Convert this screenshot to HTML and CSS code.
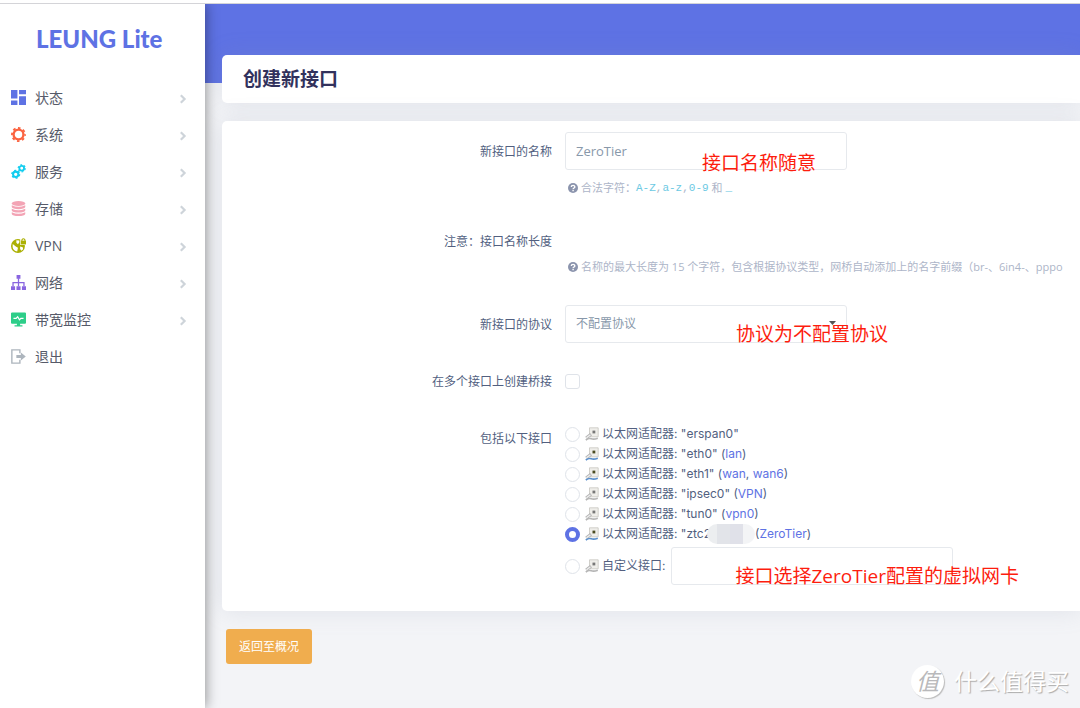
FILE: index.html
```html
<!DOCTYPE html>
<html lang="zh-CN">
<head>
<meta charset="utf-8">
<title>创建新接口</title>
<link rel="stylesheet" href="styles.css">
</head>
<body>
<svg class="defs" width="0" height="0" aria-hidden="true">
  <symbol id="chev" viewBox="0 0 8 10"><path d="M1.8 1.2 5.6 5 1.8 8.8" fill="none" stroke="currentColor" stroke-width="2.2"/></symbol>
  <symbol id="help" viewBox="0 0 10 10"><circle cx="5" cy="5" r="5" fill="currentColor"/><path d="M3.3 4C3.3 1.8 6.8 1.9 6.8 3.9 6.8 5.1 5.1 4.9 5.1 6.2M5.1 7v1.3" fill="none" stroke="#fff" stroke-width="1.4"/></symbol>
  <symbol id="nic" viewBox="0 0 14 14"><path d="M4.500 .8h8.700v9H4.500z" fill="#efeeea" stroke="#c6c5c0" stroke-width=".8"/><path d="M7.500 3.600h2.800v2.800H7.500z" fill="var(--port)"/><path d="M1.200 11 6 7.200" stroke="#b2b2b2" stroke-width="3"/><path d="M1.400 10.900 5.500 7.700" stroke="#ececec" stroke-width="1.400"/><path d="M.8 13q3-2.200 5.500-1.200T12.800 11.200" fill="none" stroke="var(--cable)" stroke-width="1.700"/></symbol>
</svg>
<div class="topline"></div>
<div class="app">
  <aside class="sidebar">
    <div class="logo">LEUNG Lite</div>
    <nav class="menu">
      <a href="#"><svg class="ico c-blue" viewBox="0 0 14 14"><path d="M0 0h6v8H0zM7.500 0H14v4H7.500zM0 9.800h6V14H0zM7.500 5.800H14V14H7.500z"/></svg><span>状态</span><svg class="chev"><use href="#chev"/></svg></a>
      <a href="#"><svg class="ico c-orange" viewBox="0 0 14 14"><circle cx="7" cy="7" r="4.600" fill="none" stroke="currentColor" stroke-width="2.200"/><circle cx="7" cy="7" r="6.100" fill="none" stroke="currentColor" stroke-width="1.700" stroke-dasharray="2.400 2.391" stroke-dashoffset="1.200"/></svg><span>系统</span><svg class="chev"><use href="#chev"/></svg></a>
      <a href="#"><svg class="ico c-cyan" viewBox="0 0 14 14"><g fill="none" stroke="currentColor"><circle cx="4.400" cy="9.600" r="2.500" stroke-width="1.900"/><circle cx="4.400" cy="9.600" r="3.700" stroke-width="1.100" stroke-dasharray="1.900 1.974"/><circle cx="10" cy="4" r="2.200" stroke-width="1.700"/><circle cx="10" cy="4" r="3.300" stroke-width="1.100" stroke-dasharray="1.700 1.756"/></g></svg><span>服务</span><svg class="chev"><use href="#chev"/></svg></a>
      <a href="#"><svg class="ico c-pink" viewBox="0 0 14 14"><ellipse cx="7" cy="2.300" rx="6.300" ry="2.300"/><path d="M.7 4q6.300 2.800 12.600 0v1.700Q12.500 7.600 7 7.600T.7 5.700zM.7 7.200q6.300 2.800 12.600 0v1.700q-.8 1.900-6.300 1.900T.7 8.900zM.7 10.400q6.300 2.800 12.600 0v1.700Q12.500 14 7 14T.7 12.100z"/></svg><span>存储</span><svg class="chev"><use href="#chev"/></svg></a>
      <a href="#"><svg class="ico c-olive" viewBox="0 0 14 14"><circle cx="6.500" cy="7.500" r="6.500"/><path d="M1.600 5.500 4.500 8 6.500 9.200 5.800 12.600Q2 12 1.500 8.500zM5 2.200l2.800.2V4L6.500 5.800 5 4.500zM8.500 8l2.500.6.3 1.800-1.600 1.400-1.200-1.500z" fill="#fff"/><path d="M8.600 0H14v6.500H8.600z" fill="#fff"/><path d="M9.200 2.500H14V6H9.200z"/><path d="M10.200 3V1.700q1.400-1.900 2.800 0V3" fill="none" stroke="currentColor" stroke-width="1"/></svg><span>VPN</span><svg class="chev"><use href="#chev"/></svg></a>
      <a href="#"><svg class="ico c-violet" viewBox="0 0 14 14"><path d="M5.200 0h3.600v3.400H5.200zM0 10.400h3.800V14H0zM5.100 10.400h3.800V14H5.100zM10.200 10.400H14V14h-3.800z"/><path d="M7 3v7.500M1.900 10.500V7.200h10.200v3.300" fill="none" stroke="currentColor" stroke-width="1.200"/></svg><span>网络</span><svg class="chev"><use href="#chev"/></svg></a>
      <a href="#"><svg class="ico c-green" viewBox="0 0 14 14"><path d="M1 .5h12q1 0 1 1V10q0 1-1 1H8.500v1.300h2.200v1.200H3.300v-1.200h2.200V11H1q-1 0-1-1V1.500q0-1 1-1z"/><path d="M2.300 5.900h2.500l1.400-1.500 1.700 2.900 1.300-1.400h2.500" fill="none" stroke="#fff" stroke-width="1.100"/></svg><span>带宽监控</span><svg class="chev"><use href="#chev"/></svg></a>
      <a href="#"><svg class="ico c-gray" viewBox="0 0 14 14"><path d="M8.300 4V.8H.8v12.400h7.500V10" fill="none" stroke="currentColor" stroke-width="1.300"/><path d="M5 5.600h4.200V3.200L13.800 7l-4.600 3.800V8.400H5z"/></svg><span>退出</span></a>
    </nav>
  </aside>
  <main class="main">
    <header class="card title-card"><h1>创建新接口</h1></header>
    <form class="card form">
      <div class="row">
        <label class="name" for="ifname">新接口的名称</label>
        <div class="field">
          <input class="box" id="ifname" type="text" value="ZeroTier">
          <p class="note note-name">接口名称随意</p>
          <p class="hint"><svg><use href="#help"/></svg>合法字符：<code>A-Z</code><code class="sep">,</code><code>a-z</code><code class="sep">,</code><code>0-9</code> 和 <code>_</code></p>
        </div>
      </div>
      <div class="row">
        <span class="name">注意：接口名称长度</span>
        <div class="field notice">
          <p class="hint"><svg><use href="#help"/></svg>名称的最大长度为 15 个字符，包含根据协议类型，网桥自动添加上的名字前缀（br-、6in4-、pppo</p>
        </div>
      </div>
      <div class="row">
        <label class="name" for="proto">新接口的协议</label>
        <div class="field">
          <select class="box" id="proto"><option>不配置协议</option></select>
          <svg class="caret" viewBox="0 0 7 4"><path d="M0 0h7L3.500 4z"/></svg>
          <p class="note note-proto">协议为不配置协议</p>
        </div>
      </div>
      <div class="row compact">
        <label class="name" for="bridge">在多个接口上创建桥接</label>
        <div class="field"><input class="check" id="bridge" type="checkbox"></div>
      </div>
      <div class="row">
        <span class="name">包括以下接口</span>
        <div class="field list">
          <div class="opt"><input type="radio" name="dev" id="d1"><svg class="nic"><use href="#nic"/></svg><label for="d1">以太网适配器: "erspan0"</label></div>
          <div class="opt"><input type="radio" name="dev" id="d2"><svg class="nic up"><use href="#nic"/></svg><label for="d2">以太网适配器: "eth0" (<a href="#">lan</a>)</label></div>
          <div class="opt"><input type="radio" name="dev" id="d3"><svg class="nic up"><use href="#nic"/></svg><label for="d3">以太网适配器: "eth1" (<a href="#">wan</a>, <a href="#">wan6</a>)</label></div>
          <div class="opt"><input type="radio" name="dev" id="d4"><svg class="nic"><use href="#nic"/></svg><label for="d4">以太网适配器: "ipsec0" (<a href="#">VPN</a>)</label></div>
          <div class="opt"><input type="radio" name="dev" id="d5"><svg class="nic"><use href="#nic"/></svg><label for="d5">以太网适配器: "tun0" (<a href="#">vpn0</a>)</label></div>
          <div class="opt"><input type="radio" name="dev" id="d6" checked><svg class="nic up"><use href="#nic"/></svg><label for="d6">以太网适配器: "ztc2<span class="smudge"></span>(<a href="#">ZeroTier</a>)</label></div>
          <div class="opt custom"><input type="radio" name="dev" id="d7"><svg class="nic"><use href="#nic"/></svg><label for="d7">自定义接口:</label>
            <div class="field"><input class="box" type="text" aria-label="自定义接口"><p class="note note-dev">接口选择ZeroTier配置的虚拟网卡</p></div>
          </div>
        </div>
      </div>
    </form>
    <button class="back" type="button">返回至概况</button>
  </main>
  <div class="mark"><span class="seal">值</span><span>什么值得买</span></div>
</div>
</body>
</html>
```
FILE: styles.css
```css
* { box-sizing: border-box; }
body {
  margin: 0;
  min-height: 100vh;
  display: flex;
  flex-direction: column;
  overflow: hidden;
  background: #f3f4f7;
  color: #525f7f;
  font: 12px/20px "Open Sans", "Noto Sans CJK SC", sans-serif;
}
p, h1 { margin: 0; }
a { color: #5e72e4; text-decoration: none; }
.defs { position: absolute; }

.topline { height: 4px; background: #fff; border-bottom: 1px solid #d4d4d8; }
.app { position: relative; flex: 1; display: flex; }

.sidebar {
  position: relative;
  z-index: 1;
  flex: 0 0 205px;
  background: #fff;
  box-shadow: 1px 0 12px rgba(0, 0, 0, .4);
  clip-path: inset(0 -30px 0 0);
}
.logo {
  padding: 17px 0 0 36px;
  height: 75px;
  font: 900 24px/36px Lato, sans-serif;
  color: #5e72e4;
  white-space: nowrap;
}
.menu a {
  display: flex;
  align-items: center;
  height: 37px;
  padding: 0 18px 0 11px;
  color: #565a69;
  font-size: 14px;
}
.menu span { flex: 1; padding-left: 9px; }
.ico { width: 15px; height: 15px; fill: currentColor; }
.chev { width: 8px; height: 10px; margin-top: 3px; color: #ced4da; }
.c-blue { color: #5e72e4; }
.c-orange { color: #fb6340; }
.c-cyan { color: #11cdef; }
.c-pink { color: #f3a4b5; }
.c-olive { color: #abb003; }
.c-violet { color: #8965e0; }
.c-green { color: #2dce89; }
.c-gray { color: #adb5bd; }

.main {
  flex: 1;
  min-width: 0;
  padding: 51px 0 0 17px;
  background: linear-gradient(#5e72e4 79px, transparent 79px);
}
.card {
  background: #fff;
  border-radius: 5px 0 0 5px;
  box-shadow: 0 0 24px rgba(136, 152, 170, .18);
}
.title-card { height: 48px; padding-left: 21px; margin-bottom: 18px; }
h1 { font-size: 19px; line-height: 48px; font-weight: 700; color: #32325d; }

.form { display: grid; gap: 24px; padding: 11px 0 26px; overflow: hidden; }
.row { display: grid; grid-template-columns: 330px minmax(0, 1fr); column-gap: 13px; line-height: 40px; }
.name { height: 38px; text-align: right; }
.field { position: relative; line-height: 20px; }
.compact { line-height: 30px; }
.compact .name { height: 28px; }
.compact .field { display: flex; align-items: center; }
.notice { padding: 35px 0 4px; }
.notice .hint { margin-top: 0; }
.box {
  display: block;
  width: 282px;
  height: 38px;
  padding: 0 10px;
  border: 1px solid #e6e9ed;
  border-radius: 3px;
  background: #fff;
  color: #8898aa;
  font: inherit;
  appearance: none;
}
input.box { font-size: 13px; }
.caret { position: absolute; left: 264px; top: 16px; width: 7px; height: 4px; fill: #555; }
.hint {
  display: flex;
  align-items: center;
  margin: 8px 0 0 3px;
  font-size: 11px;
  white-space: pre;
  color: #adb5c8;
}
.hint svg { width: 10px; height: 10px; margin-right: 3px; flex: none; color: #8b94ad; }
code { font: 11px/20px "Liberation Mono", monospace; color: #6cc9e3; }
.sep { color: #adb5c8; }

.note {
  position: absolute;
  font-size: 19px;
  line-height: 24px;
  color: #fd1d0e;
  white-space: nowrap;
}
.note-name { left: 137px; top: 19px; }
.note-proto { left: 171px; top: 17px; }
.note-dev { left: 64px; top: 17px; }

.check, .opt > input {
  appearance: none;
  width: 15px;
  height: 15px;
  margin: 0;
  border: 1px solid #dfe3e9;
  border-radius: 3px;
  background: #fff;
}
.list { padding-top: 5px; font-family: "Inter", "Noto Sans CJK SC", sans-serif; }
.opt { display: flex; align-items: center; height: 20px; white-space: pre; }
.opt > input { border-radius: 50%; margin-right: 5px; flex: none; }
.opt > input:checked { border: 4px solid #5e72e4; }
.nic { --port: #777; --cable: #b5b5b5; width: 14px; height: 14px; margin-right: 3px; flex: none; }
.up { --port: #4a4a20; --cable: #5a8fcc; }
.smudge {
  display: inline-block;
  width: 48px;
  height: 20px;
  margin-left: -4px;
  vertical-align: middle;
  border-radius: 10px;
  background: linear-gradient(90deg, #eceef0 20%, #e2e4e9 20% 48%, #e0e1e9 48% 76%, #f3f4f6 76%);
}
.custom { height: 38px; margin-top: 3px; }
.custom .field { margin-left: 6px; font-family: "Open Sans", "Noto Sans CJK SC", sans-serif; }

.back {
  display: block;
  height: 35px;
  margin: 18px 0 0 4px;
  padding: 0 13px;
  border: 0;
  border-radius: 3px;
  background: #f0ad4e;
  color: #fff;
  font: inherit;
}
.mark {
  position: absolute;
  right: 11px;
  bottom: 10px;
  display: flex;
  align-items: center;
  gap: 10px;
  font-size: 23px;
  line-height: 34px;
  color: #fff;
  text-shadow: 1px 1px 1px #aaa;
}
.seal {
  width: 33px;
  height: 33px;
  border-radius: 50%;
  background: #fff;
  box-shadow: 1px 1px 1px #bbb;
  color: #b9b9bb;
  font-style: italic;
  line-height: 32px;
  text-align: center;
  text-shadow: none;
}
```
